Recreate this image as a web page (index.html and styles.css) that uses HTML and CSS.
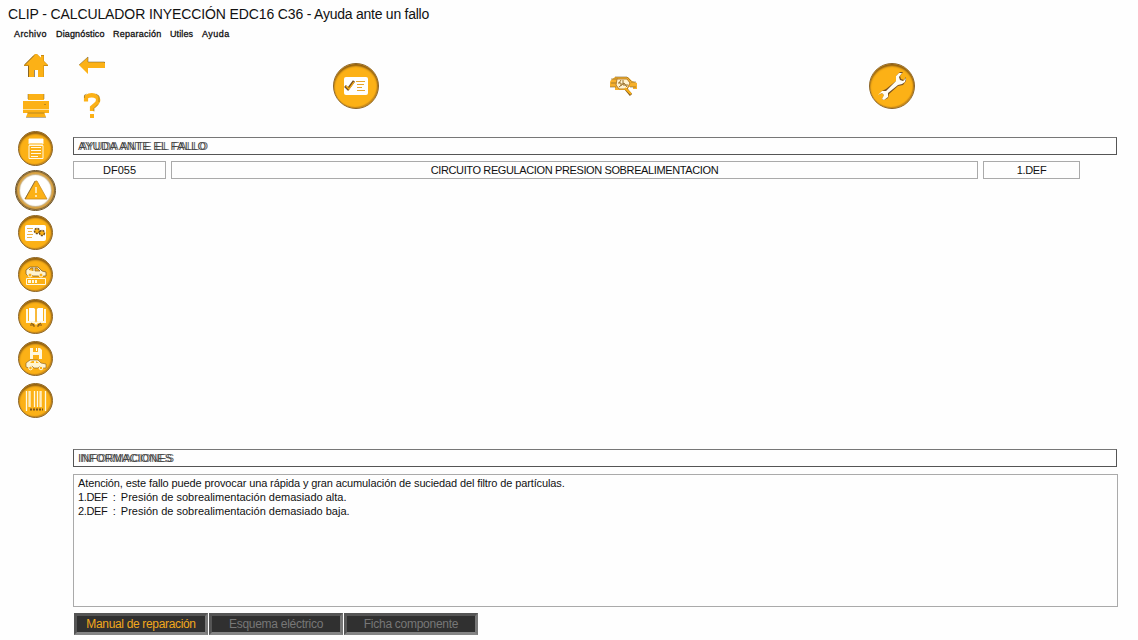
FILE: index.html
```
<!DOCTYPE html>
<html lang="es">
<head>
    <meta charset="UTF-8">
    <meta name="viewport" content="width=device-width, initial-scale=1.0">
    <title>CLIP - Ayuda ante un fallo</title>
    <link rel="stylesheet" href="styles.css">
</head>
<body>
    <div class="title"><span>CLIP - CALCULADOR INYECCIÓN EDC16 C36</span> - Ayuda ante un fallo</div>
    <nav class="menu">
        <span class="m1">Archivo</span>
        <span class="m2">Diagnóstico</span>
        <span class="m3">Reparación</span>
        <span class="m4">Utiles</span>
        <span class="m5">Ayuda</span>
    </nav>

    <div class="toolbar">
        <div class="tools">
            <svg width="28" height="28" viewBox="0 0 28 28">
                <path d="M2 15v-1L13 3h2l4 4V4h3v6l4 4v1h-4v11h-6v-7h-4v7H6V15z" fill="#c98a12"/>
                <path d="M3 13.5 13.5 3h1L19 7V5h2.500v5l4 4h-4v12H16v-7h-4v7H7V14z" fill="#fcb116"/>
                <path d="M6.500 15v11M12.500 19v7M3 13.500l9-9" stroke="#6b5429" stroke-width=".7" fill="none"/>
            </svg>
            <svg width="28" height="28" viewBox="0 0 28 28">
                <path d="M1 14 10 6v5h17v6H10v6z" fill="#fcb116"/>
                <path d="M1 14 10 6v5h16.500v1" stroke="#6b5429" stroke-width=".5" fill="none"/>
            </svg>
            <svg width="28" height="28" viewBox="0 0 28 28">
                <path d="M6 2h16v6H6zM1 9h26v12H1z" fill="#fcb116"/>
                <path d="M6 20h16l2 5H4z" fill="#fcb116"/>
                <path d="M1 17.500h26" stroke="#fff4d0" stroke-width=".7"/>
                <path d="M5.500 21h17M4 25.500h20M6 2v5M22 2v5M22 12.500h2" stroke="#7b602b" stroke-width=".5"/>
            </svg>
            <svg width="28" height="28" viewBox="0 0 28 28">
                <path d="M8 9.500V5q6-3.500 11 0 3 4-2 8l-3 2.500V19" fill="none" stroke="#fcb116" stroke-width="4.200"/>
                <path d="M12 22h4v4h-4z" fill="#fcb116"/>
                <path d="M6.500 6V3l2-1M18 2l3 2v6M16 19.500v-3l4-4" fill="none" stroke="#7b602b" stroke-width=".5"/>
            </svg>
        </div>
        <div class="modes">
            <div class="round big">
                <svg width="26" height="20" viewBox="0 0 26 20">
                    <rect x="1" y="1" width="24" height="18" rx="2" fill="#fff"/>
                    <path d="M2 10l3 3 6-8" stroke="#765021" stroke-width="2.600" fill="none"/>
                    <path d="M3 10l3 3 5-7" stroke="#fcb116" stroke-width="1.200" fill="none"/>
                    <path d="M13 5.500h9M14 8.500h7M14 11.500h5M14 14.500h8" stroke="#e8a72c"/>
                </svg>
            </div>
            <svg width="28" height="22" viewBox="0 0 28 22">
                <path d="M1 5 5 2h13l4 4 5 2v6h-4v-2h-4l-2 3H5v-3H0V7z" fill="#f7b02a"/>
                <path d="M1 4h7M5 2h12l4 4M1 8h5M21 7h5M0 12h6M20 12h6" stroke="#75602f" fill="none" stroke-width=".6"/>
                <path d="M7 4h10l3 4-3 6H9l-3-4z" fill="#fff3d0" stroke="#b9802b"/>
                <path d="M8 8h3v3M13 5v5h5M9 12l5-4 3 4M11 5l-2 3" stroke="#9a7028" fill="none"/>
                <path d="M16 14l5 6" stroke="#8b611e" stroke-width="3"/>
                <path d="M15 13l6 6" stroke="#fcb116" stroke-width="1.800"/>
            </svg>
            <div class="round big">
                <svg width="30" height="30" viewBox="0 0 30 30">
                    <g stroke-linejoin="round">
                        <path d="M2 24l3-4 4-2L19 10V5l4-4h3l-3 4 1 3 3 1 2-3v4l-3 4-5 1L12 23l-1 4-4 2-2-1 2-4-2-2z" fill="#765021"/>
                        <path d="M1 24l4-4h4L19 10V5l3-3h3l-3 4 1 3 3 1 3-3-1 4-3 2-4 1L11 22v4l-4 3-2-1 2-4-2-2z" fill="#fffdf4"/>
                    </g>
                </svg>
            </div>
        </div>
    </div>

    <div class="page">
        <div class="side">
            <div class="round">
                <svg width="18" height="24" viewBox="0 0 18 24">
                    <path d="M2 2h14v5H2zM2 8.500h14v13H2z" fill="none" stroke="#fff9e5"/>
                    <path d="M2 2h14v4H2z" fill="#fff"/>
                    <path d="M4 10.500h10M4 13.500h10M4 16.500h10M4 19.500h7" stroke="#fff9e5" stroke-width="1.200"/>
                </svg>
            </div>
            <div class="round active">
                <svg width="26" height="24" viewBox="0 0 26 24">
                    <path d="M12.500 2h1.500L24 20H2z" fill="#fcb116" stroke="#c88b22" stroke-width=".8"/>
                    <path d="M12 2 2 20" stroke="#765a27" stroke-width=".7"/>
                    <path d="M13 8v6M13 16v2" stroke="#fff5d7" stroke-width="1.500"/>
                </svg>
            </div>
            <div class="round">
                <svg width="24" height="18" viewBox="0 0 24 18">
                    <rect x="1" y="1" width="21" height="16" rx="2" fill="#fff"/>
                    <path d="M3 4.500h6M4 7.500h4M3 10.500h6M3 13.500h5" stroke="#edb44a"/>
                    <circle cx="13" cy="7" r="2.500" fill="#fcb116" stroke="#6d4c1d" stroke-width="1.500" stroke-dasharray="2 1"/>
                    <circle cx="18" cy="9" r="2.500" fill="#fcb116" stroke="#6d4c1d" stroke-width="1.500" stroke-dasharray="2 1"/>
                </svg>
            </div>
            <div class="round">
                <svg width="24" height="24" viewBox="0 0 24 24">
                    <path d="M2 11V7l4-3h8l4 4 4 1v4h-3l-2-2-2 2H9l-2-2-3 2z" fill="#fff4cf" stroke="#735520" stroke-width=".7"/>
                    <path d="M5 7l2-2h2v3M11 5h2l3 3h-5z" fill="#fcb116" stroke="#90631b" stroke-width=".7"/>
                    <circle cx="6" cy="12" r="2" fill="#fcb116" stroke="#fff8df"/>
                    <circle cx="17" cy="12" r="2" fill="#fcb116" stroke="#fff8df"/>
                    <path d="M2.500 15.500h19v6h-19z" fill="none" stroke="#fff8df"/>
                    <path d="M4 17h3v3H4zM8 17h2v3H8zM11 17h2v3h-2z" fill="#fff8df"/>
                </svg>
            </div>
            <div class="round">
                <svg width="24" height="24" viewBox="0 0 24 24">
                    <path d="M2 4v14h7q2 0 3 2 1-2 3-2h7V4h-2v12h-6q-2 0-2 2 0-2-2-2H4V4z" fill="#fff8df"/>
                    <path d="M5 3h5l1 1v12H5zM14 3h5v13h-6V4z" fill="#fff"/>
                    <path d="M12 4v13" stroke="#f4c260"/>
                    <path d="M6 20h4v2M18 20h-4v2M7 18l3 2M17 18l-3 2" stroke="#78531a" fill="none"/>
                </svg>
            </div>
            <div class="round">
                <svg width="24" height="26" viewBox="0 0 24 26">
                    <path d="M6 2h10l2 2v9H6z" fill="#fff8df"/>
                    <path d="M9 2h5v4H9zM9 9h6v4H9z" fill="#fcb116"/>
                    <path d="M12 2h1v3h-1z" fill="#fff"/>
                    <path d="M2 21v-4l4-3h8l3 3 5 1v4h-4l-2-2-2 2h-4l-2-2-3 2z" fill="#fff4cf" stroke="#80591e" stroke-width=".6"/>
                    <path d="M6 17l2-2h2v2M12 15l3 2h-3z" fill="#fcb116"/>
                    <circle cx="6.500" cy="22" r="1.800" fill="#fcb116" stroke="#fff8df"/>
                    <circle cx="17" cy="22" r="1.800" fill="#fcb116" stroke="#fff8df"/>
                </svg>
            </div>
            <div class="round">
                <svg width="22" height="22" viewBox="0 0 22 22">
                    <path d="M1.500 1v20M5 1v16M9.500 1v16M12.500 1v16M16 1v16M20.500 1v20" stroke="#fff8df" stroke-width="1.300"/>
                    <path d="M4 1v16M15 1v16" stroke="#fff8df"/>
                    <path d="M5 19.500h13" stroke="#76531c" stroke-width="2" stroke-dasharray="2 1"/>
                </svg>
            </div>
        </div>

        <div class="content">
            <div class="heading"><span class="h1">AYUDA ANTE EL FALLO</span></div>
            <div class="fault">
                <div class="code">DF055</div>
                <div class="name"><span>CIRCUITO REGULACION PRESION SOBREALIMENTACION</span></div>
                <div class="def">1.DEF</div>
            </div>
            <div class="heading infoHeading"><span class="h2">INFORMACIONES</span></div>
            <div class="info">
                <div class="l1">Atención, este fallo puede provocar una rápida y gran acumulación de suciedad del filtro de partículas.</div>
                <div class="l2"><span>1.DEF&nbsp; :&nbsp; </span>Presión de sobrealimentación demasiado alta.</div>
                <div class="l2"><span>2.DEF&nbsp; :&nbsp; </span>Presión de sobrealimentación demasiado baja.</div>
            </div>
            <div class="buttons">
                <button class="on">Manual de reparación</button>
                <button>Esquema eléctrico</button>
                <button>Ficha componente</button>
            </div>
        </div>
    </div>
</body>
</html>
```
FILE: styles.css
```
* {
    box-sizing: border-box;
}

body {
    margin: 0;
    height: 640px;
    overflow: hidden;
    background: #fefefe;
    color: #111;
    font-family: "Liberation Sans", Arial, sans-serif;
    font-size: 11px;
    white-space: nowrap;
}

svg {
    display: block;
}

.title {
    height: 27px;
    padding-left: 8px;
    font-size: 14px;
    line-height: 28px;
    letter-spacing: -0.25px;
}

.title span {
    letter-spacing: -0.11px;
}

.menu {
    display: flex;
    height: 14px;
    padding-left: 14px;
    font-size: 9px;
    line-height: 14px;
    -webkit-text-stroke: 0.3px #111;
}

.m1 {
    width: 42px;
    letter-spacing: 0.4px;
}

.m2 {
    width: 57px;
    letter-spacing: 0.15px;
}

.m3 {
    width: 57px;
    letter-spacing: 0.25px;
}

.m4 {
    width: 32px;
    letter-spacing: 0.1px;
}

.m5 {
    letter-spacing: 0.5px;
}

.toolbar {
    display: flex;
    height: 87px;
}

.tools {
    display: grid;
    grid-template-columns: 28px 28px;
    grid-template-rows: 28px 28px;
    gap: 13px 28px;
    width: 222px;
    padding: 10px 0 0 22px;
}

.modes {
    display: grid;
    grid-template-columns: repeat(3, 268px);
    height: 90px;
    align-items: center;
    justify-items: center;
}

.round {
    display: flex;
    align-items: center;
    justify-content: center;
    width: 35px;
    height: 35px;
    border-radius: 50%;
    background: #fcb116;
    border: 1px solid #8a652c;
    box-shadow: inset 0 2px 2px #8a5b12, inset -1px -1px 1px #c98a1c;
}

.big {
    width: 46px;
    height: 46px;
}

.active {
    width: 41px;
    height: 41px;
    margin: -3px 0;
    background: #fff;
    border: 1px solid #6e5427;
    box-shadow: inset 0 0 1px 1px #7d6235, inset 0 0 0 3px #dca545, inset 0 0 1px 4px #c9b183;
}

.page {
    display: flex;
}

.side {
    display: flex;
    flex-direction: column;
    align-items: center;
    gap: 7px;
    width: 71px;
    padding-top: 3px;
}

.content {
    width: 1045px;
    margin-left: 2px;
    padding-top: 9px;
}

.heading {
    width: 1044px;
    height: 18px;
    padding-left: 5px;
    border: 1px solid #555;
    border-top-color: #777;
    line-height: 17px;
    font-size: 11px;
    color: transparent;
    text-shadow: -1px 0 #444, 1px 0 #666;
}

.h1 {
    letter-spacing: 0.36px;
}

.h2 {
    letter-spacing: 0.1px;
}

.fault {
    display: flex;
    gap: 5px;
    margin-top: 6px;
    text-align: center;
    line-height: 16px;
}

.fault div {
    height: 18px;
    border: 1px solid #aaa;
}

.fault .name {
    width: 807px;
    letter-spacing: -0.38px;
}

.code {
    width: 93px;
}

.def {
    width: 97px;
    letter-spacing: -0.3px;
}

.infoHeading {
    margin-top: 270px;
}

.info {
    height: 133px;
    margin-top: 7px;
    padding: 1px 4px;
    border: 1px solid #aaa;
    line-height: 14px;
}

.l1 {
    letter-spacing: -0.12px;
}

.l2 span {
    letter-spacing: -0.36px;
}

.buttons {
    display: flex;
    gap: 1px;
    margin: 6px 0 0 1px;
}

button {
    width: 134px;
    height: 22px;
    padding: 0;
    background: #303030;
    border: 3px solid;
    border-color: #555 #777 #858585 #555;
    color: #777;
    font-family: inherit;
    font-size: 12px;
    line-height: 16px;
    letter-spacing: -0.27px;
}

button.on {
    color: #f0a81c;
    letter-spacing: -0.34px;
}
```
